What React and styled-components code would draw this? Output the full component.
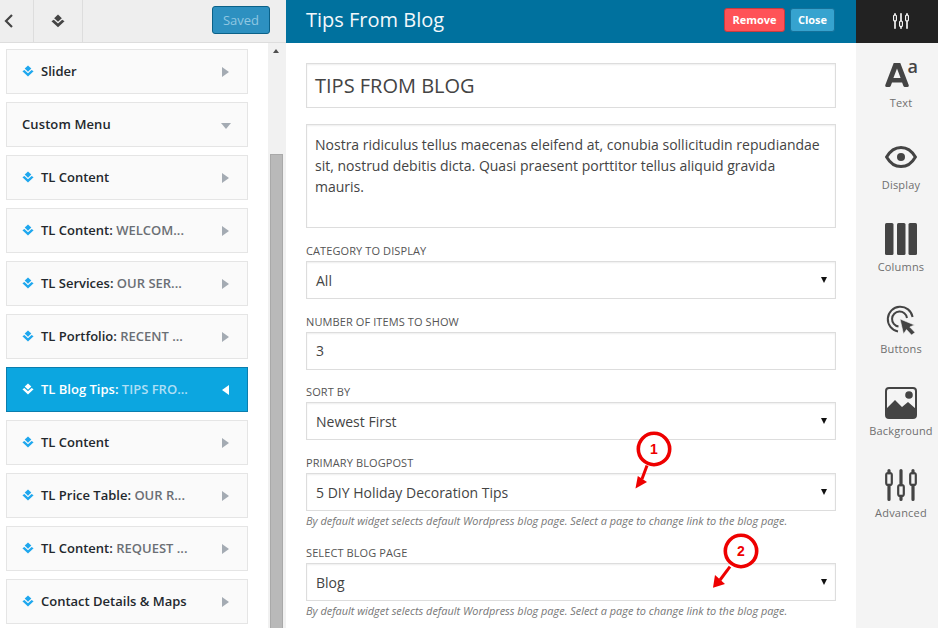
import React from "react"
import styled, { createGlobalStyle } from "styled-components"

const GlobalStyle = createGlobalStyle`
  html, body {
    margin: 0;
    padding: 0;
    overflow: hidden;
    background: #fff;
  }
  * {
    box-sizing: border-box;
  }
`

const Page = styled.div`
  position: relative;
  display: flex;
  width: 938px;
  height: 628px;
  overflow: hidden;
  font-family: "Open Sans", sans-serif;
`

const Sidebar = styled.aside`
  display: flex;
  flex-direction: column;
  width: 286px;
  flex-shrink: 0;
`

const TopBar = styled.div`
  display: flex;
  align-items: stretch;
  height: 43px;
  flex-shrink: 0;
  background: #eeeeee;
  border-bottom: 1px solid #dddddd;
`

const TopIcon = styled.div`
  display: flex;
  align-items: center;
  justify-content: ${({ wide }) => (wide ? "center" : "flex-start")};
  width: ${({ wide }) => (wide ? "49px" : "34px")};
  padding-left: ${({ wide }) => (wide ? "0" : "4px")};
  border-right: 1px solid #dddddd;
  color: #444444;
`

const SavedButton = styled.div`
  width: 58px;
  height: 28px;
  margin: 6px 16px 0 auto;
  border: 1px solid #0b6188;
  border-radius: 3px;
  background: #2d90c0;
  color: #8fc7e2;
  font-size: 13px;
  line-height: 26px;
  text-align: center;
`

const ListArea = styled.div`
  display: flex;
  flex: 1;
  min-height: 0;
`

const WidgetList = styled.div`
  display: flex;
  flex-direction: column;
  gap: 8px;
  width: 268px;
  padding: 6px 20px 0 6px;
`

const Widget = styled.div`
  display: flex;
  align-items: center;
  flex-shrink: 0;
  height: 45px;
  padding: 0 18px 2px 15px;
  border: 1px solid ${({ active }) => (active ? "#0b7eae" : "#e5e5e5")};
  background: ${({ active }) => (active ? "#0ca6e0" : "#fafafa")};
  color: ${({ active }) => (active ? "#ffffff" : "#23282d")};
  font-size: 13px;
  font-weight: 600;
  white-space: nowrap;
`

const WidgetName = styled.span`
  margin-left: ${({ plain }) => (plain ? "0" : "7px")};
  letter-spacing: ${({ plain }) => (plain ? "0.1px" : "0")};
`

const WidgetTitle = styled.span`
  color: ${({ active }) => (active ? "#aedff5" : "#6b6f75")};
`

const Arrow = styled.span`
  margin-left: auto;
  margin-top: 2px;
  width: 0;
  height: 0;
  ${({ dir, active }) => {
    const c = active ? "#ffffff" : "#a4abb3"
    if (dir === "down")
      return `border-left:5px solid transparent;border-right:5px solid transparent;border-top:6px solid ${c};margin-right:-2px;margin-top:4px;`
    if (dir === "left")
      return `border-top:5px solid transparent;border-bottom:5px solid transparent;border-right:7px solid ${c};`
    return `border-top:5px solid transparent;border-bottom:5px solid transparent;border-left:7px solid ${c};`
  }}
`

const Scrollbar = styled.div`
  display: flex;
  flex-direction: column;
  width: 18px;
  background: #f1f1f1;
`

const ScrollUp = styled.div`
  width: 0;
  height: 0;
  margin: 6px 0 0 5px;
  border-left: 3.5px solid transparent;
  border-right: 3.5px solid transparent;
  border-bottom: 4px solid #505050;
`

const ScrollThumb = styled.div`
  width: 13px;
  margin: 101px 0 0 2px;
  flex: 1;
  background: #b9b9b9;
  border: 1px solid #a9a9a9;
  border-bottom: 0;
`

const Main = styled.main`
  display: flex;
  flex-direction: column;
  width: 570px;
  flex-shrink: 0;
  background: #ffffff;
`

const Header = styled.header`
  display: flex;
  align-items: center;
  height: 43px;
  flex-shrink: 0;
  padding: 0 21px 4px 20px;
  background: #00719e;
  color: #f2f8fb;
`

const HeaderTitle = styled.h1`
  margin: 0 auto 0 0;
  font-size: 20px;
  font-weight: 400;
`

const HeaderButton = styled.div`
  height: 24px;
  width: ${({ danger }) => (danger ? "61px" : "45px")};
  margin-left: ${({ danger }) => (danger ? "0" : "5px")};
  border: 1px solid ${({ danger }) => (danger ? "#c93b3f" : "#14719a")};
  border-radius: 3px;
  background: ${({ danger }) => (danger ? "#ff5257" : "#36a3cf")};
  color: #ffffff;
  font-size: 11px;
  font-weight: 700;
  line-height: 22px;
  text-align: center;
`

const Form = styled.div`
  display: flex;
  flex-direction: column;
  padding: 20px 20px 0;
`

const Field = styled.div`
  height: ${({ h }) => h}px;
  margin-bottom: ${({ mb }) => mb || 0}px;
  border: 1px solid #dddddd;
  box-shadow: inset 0 1px 2px rgba(0, 0, 0, 0.07);
  color: #32373c;
`

const TitleField = styled(Field)`
  padding: 0 8px;
  font-size: 20px;
  line-height: 43px;
  color: #444444;
`

const TextField = styled(Field)`
  padding: 9px 8px 0;
  font-size: 14px;
  line-height: 21px;
  color: #444444;
`

const Label = styled.div`
  height: 16px;
  margin-bottom: 2px;
  color: #555555;
  font-size: 11px;
  letter-spacing: 0.1px;
  line-height: 16px;
  text-transform: uppercase;
`

const SelectBox = styled(Field)`
  display: flex;
  align-items: center;
  justify-content: space-between;
  padding: ${({ low }) => (low ? "1px" : "0")} 8px 0 9px;
  font-size: 14px;
  color: #444444;
`

const Caret = styled.span`
  width: 0;
  height: 0;
  border-left: 3.5px solid transparent;
  border-right: 3.5px solid transparent;
  border-top: 6px solid #111111;
`

const Hint = styled.div`
  height: 18px;
  margin: 1px 0 15px;
  color: #777777;
  font-size: 10.93px;
  font-style: italic;
  line-height: 18px;
`

const Rail = styled.nav`
  display: flex;
  flex-direction: column;
  align-items: center;
  width: 82px;
  flex-shrink: 0;
  padding-left: 8px;
  background: #f4f4f4;
`

const RailTop = styled.div`
  display: flex;
  align-items: center;
  justify-content: center;
  align-self: stretch;
  height: 43px;
  margin-left: -8px;
  padding-left: 8px;
  padding-bottom: 1px;
  background: #222222;
  color: #ffffff;
`

const RailItem = styled.div`
  display: flex;
  flex-direction: column;
  align-items: center;
  justify-content: flex-end;
  height: 82px;
  color: #444444;
  margin-top: ${({ first }) => (first ? "-14px" : "0")};
`

const RailIcon = styled.div`
  display: flex;
  align-items: center;
  justify-content: center;
  width: 32px;
  height: 32px;
`

const RailLabel = styled.span`
  margin-top: 4px;
  height: 16px;
  color: #6f6f6f;
  font-size: 11px;
  letter-spacing: 0.2px;
  line-height: 16px;
  white-space: nowrap;
`

const Callout = styled.svg`
  position: absolute;
  left: ${({ x }) => x}px;
  top: ${({ y }) => y}px;
  overflow: visible;
`

const LayersIcon = ({ color = "#1ea7ee", size = 12 }) => (
  <svg width={size} height={size} viewBox="0 0 12 12" fill={color}>
    <path d="M6 0.5 9.3 3.6 6 6.7 2.7 3.6Z" />
    <path d="M0.4 6.2 2.4 4.9 6 8.2 9.6 4.9 11.6 6.2 6 11.4Z" />
  </svg>
)

const SlidersIcon = ({ size = 32, height = 32 }) => (
  <svg width={size} height={height} viewBox="0 0 32 32" fill="none" stroke="currentColor">
    <g strokeWidth="3.2" strokeLinecap="round">
      <path d="M4 1.6v2.4M4 16v14.4M16 1.6v14.4M16 27v3.4M28 1.6v2.4M28 16v14.4" />
    </g>
    <g strokeWidth="2.2">
      <rect x="1.2" y="4" width="5.6" height="12" rx="2" />
      <rect x="13.2" y="16" width="5.6" height="11" rx="2" />
      <rect x="25.2" y="4" width="5.6" height="12" rx="2" />
    </g>
  </svg>
)

const TextIcon = () => (
  <svg width="32" height="32" viewBox="0 0 32 32" fill="currentColor" overflow="visible">
    <path d="M8.7 4h6.6L23.7 26c.3 1-.2 2-1.2 2h-2.6c-.7 0-1.2-.4-1.5-1.1l-1.3-3.4H7l-1.3 3.4c-.3.7-.8 1.1-1.5 1.1H1.5c-1 0-1.5-1-1.2-2ZM8.4 19h7.2L12 9.5Z" />
    <text x="22.5" y="14" fontFamily="Open Sans" fontSize="18" fontWeight="600">a</text>
  </svg>
)

const EyeIcon = () => (
  <svg width="32" height="24" viewBox="0 0 32 24">
    <path d="M1.6 12C5 6 10 2.4 16 2.4S27 6 30.4 12C27 18 22 21.6 16 21.6S5 18 1.6 12Z" fill="none" stroke="currentColor" strokeWidth="3" />
    <circle cx="16" cy="12" r="4" fill="currentColor" />
  </svg>
)

const ColumnsIcon = () => (
  <svg width="32" height="32" viewBox="0 0 32 32" fill="currentColor">
    <rect x="0" y="0" width="8.5" height="32" rx="1.5" />
    <rect x="12" y="0" width="8.5" height="32" rx="1.5" />
    <rect x="23.5" y="0" width="8.5" height="32" rx="1.5" />
  </svg>
)

const ButtonsIcon = () => (
  <svg width="32" height="32" viewBox="0 0 32 32">
    <path d="M13 26.5A12.5 12.5 0 1 1 27.6 12" fill="none" stroke="currentColor" strokeWidth="2" />
    <path d="M13.5 21.5A7.5 7.5 0 1 1 22 13" fill="none" stroke="currentColor" strokeWidth="2" />
    <path d="M15 14 29.5 20 24.8 22 30 27.5 26.5 30 21.5 24.6 18.5 29Z" fill="currentColor" stroke="#f4f4f4" strokeWidth="0.6" />
  </svg>
)

const BackgroundIcon = () => (
  <svg width="32" height="32" viewBox="0 0 32 32">
    <rect x="1" y="1" width="30" height="30" rx="3" fill="none" stroke="currentColor" strokeWidth="2" />
    <circle cx="24" cy="8" r="3.8" fill="currentColor" />
    <path d="M1 22 10 13 17 20 23 15 31 22V28a3 3 0 0 1-3 3H4a3 3 0 0 1-3-3Z" fill="currentColor" />
  </svg>
)

const widgets = [
  { name: "Slider" },
  { name: "Custom Menu", plain: true },
  { name: "TL Content" },
  { name: "TL Content:", title: "WELCOM..." },
  { name: "TL Services:", title: "OUR SER..." },
  { name: "TL Portfolio:", title: "RECENT ..." },
  { name: "TL Blog Tips:", title: "TIPS FRO...", active: true },
  { name: "TL Content" },
  { name: "TL Price Table:", title: "OUR R..." },
  { name: "TL Content:", title: "REQUEST ..." },
  { name: "Contact Details & Maps" },
]

const fields = [
  { label: "Category to display", value: "All", select: true, mb: 14.5 },
  { label: "Number of items to show", value: "3", mb: 14.5 },
  { label: "Sort by", value: "Newest First", select: true, mb: 14.5 },
  { label: "Primary Blogpost", value: "5 DIY Holiday Decoration Tips", select: true, hint: true },
  { label: "Select blog page", value: "Blog", select: true, hint: true },
]

const railItems = [
  { label: "Text", icon: <TextIcon /> },
  { label: "Display", icon: <EyeIcon /> },
  { label: "Columns", icon: <ColumnsIcon /> },
  { label: "Buttons", icon: <ButtonsIcon /> },
  { label: "Background", icon: <BackgroundIcon /> },
  { label: "Advanced", icon: <SlidersIcon /> },
]

const hintText =
  "By default widget selects default Wordpress blog page. Select a page to change link to the blog page."

const CalloutMark = ({ x, y, n, arrow }) => (
  <Callout x={x} y={y} width="36" height="36" viewBox="0 0 36 36">
    <path d={arrow.line} stroke="#ee0000" strokeWidth="3" fill="none" />
    <path d={arrow.head} fill="#ee0000" />
    <circle cx="18" cy="18" r="15.7" fill="#ffffff" stroke="#ee0000" strokeWidth="3.6" />
    <text x="18" y="23" textAnchor="middle" fill="#ee0000" fontFamily="Liberation Sans" fontSize="14" fontWeight="700">
      {n}
    </text>
  </Callout>
)

export default function App() {
  return (
    <Page>
      <GlobalStyle />
      <Sidebar>
        <TopBar>
          <TopIcon>
            <svg width="10" height="14" viewBox="0 0 10 14" fill="none" stroke="currentColor" strokeWidth="2.2">
              <path d="M8 1 2 7 8 13" />
            </svg>
          </TopIcon>
          <TopIcon wide>
            <LayersIcon color="#444444" size={14} />
          </TopIcon>
          <SavedButton>Saved</SavedButton>
        </TopBar>
        <ListArea>
          <WidgetList>
            {widgets.map((w, i) => (
              <Widget key={i} active={w.active}>
                {!w.plain && <LayersIcon color={w.active ? "#ffffff" : "#1ea7ee"} />}
                <WidgetName plain={w.plain}>
                  {w.name}
                  {w.title && <WidgetTitle active={w.active}> {w.title}</WidgetTitle>}
                </WidgetName>
                <Arrow dir={w.active ? "left" : w.plain ? "down" : "right"} active={w.active} />
              </Widget>
            ))}
          </WidgetList>
          <Scrollbar>
            <ScrollUp />
            <ScrollThumb />
          </Scrollbar>
        </ListArea>
      </Sidebar>
      <Main>
        <Header>
          <HeaderTitle>Tips From Blog</HeaderTitle>
          <HeaderButton danger>Remove</HeaderButton>
          <HeaderButton>Close</HeaderButton>
        </Header>
        <Form>
          <TitleField h={45} mb={16}>TIPS FROM BLOG</TitleField>
          <TextField h={104} mb={15}>
            Nostra ridiculus tellus maecenas eleifend at, conubia sollicitudin repudiandae sit, nostrud debitis dicta. Quasi praesent porttitor tellus aliquid gravida mauris.
          </TextField>
          {fields.map((f) => (
            <div key={f.label}>
              <Label>{f.label}</Label>
              <SelectBox h={38} mb={f.mb} low={f.hint}>
                {f.value}
                {f.select && <Caret />}
              </SelectBox>
              {f.hint && <Hint>{hintText}</Hint>}
            </div>
          ))}
        </Form>
      </Main>
      <Rail>
        <RailTop>
          <SlidersIcon size={18} height={16} />
        </RailTop>
        {railItems.map((r, i) => (
          <RailItem key={r.label} first={i === 0}>
            <RailIcon>{r.icon}</RailIcon>
            <RailLabel>{r.label}</RailLabel>
          </RailItem>
        ))}
      </Rail>
      <CalloutMark x={635.5} y={430.5} n="1" arrow={{ line: "M11 34.5 6 48", head: "M-0.5 57.5 1.8 45 11 51Z" }} />
      <CalloutMark x={723} y={533} n="2" arrow={{ line: "M7 33.7 -3 47", head: "M-10 54.7 -8 42 2 51Z" }} />
    </Page>
  )
}
